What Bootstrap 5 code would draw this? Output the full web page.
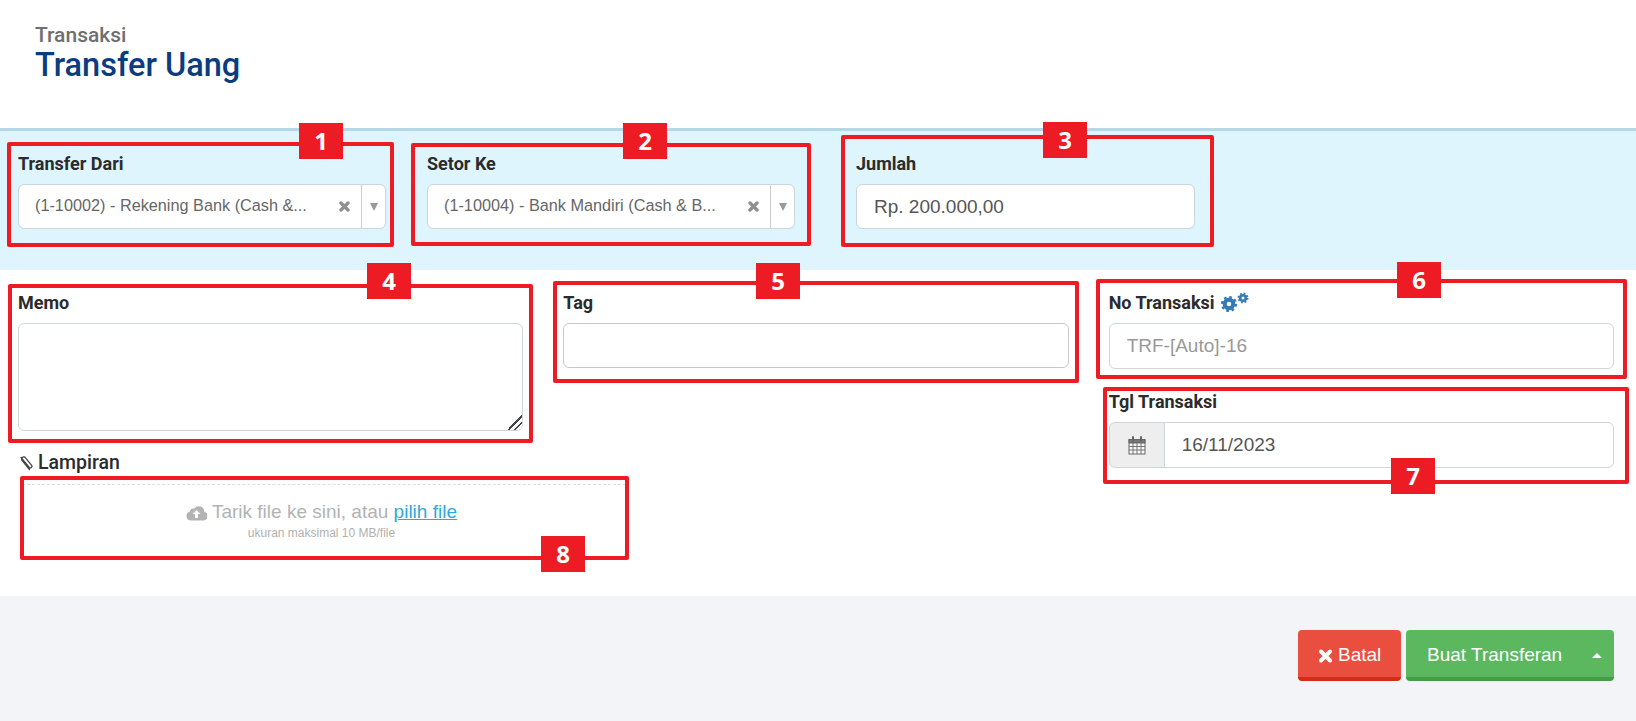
<!DOCTYPE html>
<html lang="id">
<head>
  <meta charset="UTF-8" />
  <meta name="viewport" content="width=device-width, initial-scale=1.0"/>
  <title>Transfer Uang</title>
  <link href="https://cdn.jsdelivr.net/npm/bootstrap@5.3.0/dist/css/bootstrap.min.css" rel="stylesheet" />
  <style>
    body {
      font-family: "Liberation Sans", Arial, sans-serif;
      background: #fff;
      color: #2b2b2b;
      margin: 0;
    }
    .page-wrap { position: relative; height: 721px; overflow: hidden; }
    .page-head { height: 128px; padding: 22px 0 0 35px; font-family: Roboto, sans-serif; font-weight: 500; }
    .head-sub { font-size: 21px; line-height: 26px; color: #6f6f6f; }
    .head-title { font-size: 32.5px; line-height: 34px; color: #0b3c7d; margin: 0; font-weight: 500; }

    .band { height: 142px; background: #def5fe; border-top: 3px solid #b5d7e6; padding-top: 22px; }
    .band-col { padding: 0 23px 0 18px; }
    .band-col-wide { padding: 0 32px 0 38px; }
    .form-col { padding: 0 22px 0 18px; }
    .fields { padding-top: 22px; height: 326px; }

    .field-label {
      font-family: Roboto, sans-serif;
      font-weight: 700;
      font-size: 18px;
      line-height: 22px;
      color: #2b2b2b;
      margin: 0 0 9px;
      display: block;
    }
    .field-box.form-control, .field-box .form-control {
      height: 45px;
      border-radius: 6px;
      border-color: #cdd7da;
      font-size: 19px;
      padding: 0 17px;
      color: #555;
      box-shadow: none;
    }
    .field-box .form-control::placeholder, .field-box.form-control::placeholder { color: #999; }
    .field-tall.form-control, .field-tall .form-control { height: 46px; }
    .memo-box.form-control { height: 108px; border-radius: 6px; border-color: #cdd7da; box-shadow: none; }
    .memo-box::-webkit-resizer {
      background: linear-gradient(135deg, transparent 50%, #444 50%, #444 57%, transparent 57%, transparent 72%, #444 72%, #444 79%, transparent 79%);
    }
    .tag-box.form-control { border-color: #c9c9c9; }
    .pick-box { padding: 0 !important; font-size: 16.25px !important; color: #666 !important; }
    .pick-text { flex: 1; min-width: 0; padding-left: 16px; padding-bottom: 3px; white-space: nowrap; }
    .pick-clear { width: 34px; display: flex; justify-content: center; }
    .pick-arrow { width: 24px; height: 100%; border-left: 1px solid #ccc; display: flex; align-items: center; justify-content: center; }
    .tri-down { width: 0; height: 0; border: 4.5px solid transparent; border-top: 8px solid #999; border-bottom: 0; }
    .cal-addon.input-group-text { width: 56px; justify-content: center; background: #eee; border-color: #cdd7da; border-radius: 6px 0 0 6px; padding: 0; }
    .date-row .form-control { border-radius: 0 6px 6px 0; }
    .date-group { margin-top: 22px; }
    .gear-label { display: flex; align-items: center; gap: 6px; }
    .gear-icon { margin-top: -2px; }

    .lamp-label { font-family: Roboto, sans-serif; font-weight: 500; font-size: 19.5px; line-height: 22px; margin: 0 0 10px; display: flex; align-items: center; gap: 5px; }
    .lamp-wrap { margin-top: 21px; }
    .drop-zone {
      width: 604px;
      height: 74px;
      margin-left: 4px;
      border: 1px dashed #ddd;
      text-align: center;
      padding: 16px 5px 0 0;
      color: #b3b3b3;
      font-size: 19px;
      line-height: 22px;
    }
    .drop-zone a { color: #2ea8e0; }
    .drop-hint { font-size: 12px; line-height: 14px; color: #b0b0b0; margin-top: 3px; }

    .foot-bar { height: 125px; background: #f2f4f8; padding: 34px 22px 0 0; gap: 5px; }
    .act-btn {
      height: 51px;
      border: 0;
      border-bottom: 4px solid;
      border-radius: 4px;
      color: #fff;
      font-size: 19px;
      padding: 4px 0 0;
    }
    .act-btn:hover, .act-btn:active { color: #fff !important; }
    .act-cancel { width: 103px; background: #e94e3e; border-color: #d22d18; }
    .act-cancel:hover, .act-cancel:active { background: #e94e3e !important; border-color: #d22d18 !important; }
    .act-save { width: 208px; background: #5cb85f; border-color: #469c49; display: flex; align-items: center; padding-left: 21px; justify-content: space-between; padding-right: 12px; }
    .act-save:hover, .act-save:active { background: #5cb85f !important; border-color: #469c49 !important; }
    .tri-up { width: 0; height: 0; border: 5px solid transparent; border-bottom: 5px solid #fff; border-top: 0; }

    /* annotation frames sit over the form */
    .note-frame { position: absolute; border: 4px solid #ed1c24; border-radius: 2px; }
    .note-num {
      position: absolute;
      width: 44px;
      height: 36px;
      background: #ed1c24;
      color: #fff;
      font-family: "Open Sans", sans-serif;
      font-weight: 700;
      font-size: 24px;
      line-height: 36px;
      text-align: center;
    }
    .nf-1 { left: 7px; top: 142px; width: 387px; height: 105px; }
    .nn-1 { left: 299px; top: 123px; }
    .nf-2 { left: 411px; top: 143px; width: 400px; height: 103px; }
    .nn-2 { left: 623px; top: 123px; }
    .nf-3 { left: 841px; top: 135px; width: 373px; height: 112px; }
    .nn-3 { left: 1043px; top: 122px; }
    .nf-4 { left: 8px; top: 284px; width: 525px; height: 159px; }
    .nn-4 { left: 367px; top: 263px; }
    .nf-5 { left: 553px; top: 281px; width: 526px; height: 102px; }
    .nn-5 { left: 756px; top: 263px; }
    .nf-6 { left: 1096px; top: 279px; width: 531px; height: 100px; }
    .nn-6 { left: 1397px; top: 262px; }
    .nf-7 { left: 1103px; top: 387px; width: 526px; height: 97px; }
    .nn-7 { left: 1391px; top: 458px; }
    .nf-8 { left: 20px; top: 476px; width: 609px; height: 84px; }
    .nn-8 { left: 541px; top: 536px; }
  </style>
</head>
<body>
  <div class="page-wrap">
    <div class="page-head">
      <div class="head-sub">Transaksi</div>
      <h1 class="head-title">Transfer Uang</h1>
    </div>

    <!-- Accounts and amount -->
    <div class="band">
      <div class="row g-0">
        <div class="col-3 band-col">
          <label class="field-label">Transfer Dari</label>
          <div class="field-box form-control pick-box d-flex align-items-center">
            <span class="pick-text">(1-10002) - Rekening Bank (Cash &amp;...</span>
            <span class="pick-clear"><svg width="11" height="11" viewBox="0 0 11 11"><path d="M2 2l7 7M9 2l-7 7" stroke="#909090" stroke-width="3.4" stroke-linecap="round"/></svg></span>
            <span class="pick-arrow"><span class="tri-down"></span></span>
          </div>
        </div>
        <div class="col-3 band-col">
          <label class="field-label">Setor Ke</label>
          <div class="field-box form-control pick-box d-flex align-items-center">
            <span class="pick-text">(1-10004) - Bank Mandiri (Cash &amp; B...</span>
            <span class="pick-clear"><svg width="11" height="11" viewBox="0 0 11 11"><path d="M2 2l7 7M9 2l-7 7" stroke="#909090" stroke-width="3.4" stroke-linecap="round"/></svg></span>
            <span class="pick-arrow"><span class="tri-down"></span></span>
          </div>
        </div>
        <div class="col-3 band-col-wide">
          <label class="field-label">Jumlah</label>
          <input class="field-box form-control" type="text" value="Rp. 200.000,00">
        </div>
      </div>
    </div>

    <!-- Memo, tag, number, date -->
    <div class="fields">
      <div class="row g-0">
        <div class="col-4 form-col">
          <label class="field-label">Memo</label>
          <textarea class="memo-box form-control"></textarea>
          <div class="lamp-wrap">
            <div class="lamp-label">
              <svg width="15" height="18" viewBox="0 0 15 18" fill="none" stroke="#444" stroke-width="1.3" stroke-linecap="round"><path d="M11.5 15.5L4.2 6.6c-.8-1-.8-2.4.2-3.2s2.300-.6 3.100.4l6 7.300c1.400 1.700-1 3.900-2.500 2.100L3 3.500"/></svg>
              Lampiran
            </div>
            <div class="drop-zone">
              <svg width="21" height="16" viewBox="0 0 21 16"><path d="M5 15.500a4.500 4.500 0 0 1-1.300-8.800 4 4 0 0 1 4.800-3.300A5.500 5.500 0 0 1 18.300 6.700 4.500 4.500 0 0 1 16.500 15.500z" fill="#b3b3b3"/><path d="M10.500 5l-4 4h2.500v4h3V9h2.500z" fill="#fff"/></svg>
              Tarik file ke sini, atau <a href="#">pilih file</a>
              <div class="drop-hint">ukuran maksimal 10 MB/file</div>
            </div>
          </div>
        </div>
        <div class="col-4 form-col">
          <label class="field-label">Tag</label>
          <input class="field-box tag-box form-control" type="text">
        </div>
        <div class="col-4 form-col">
          <label class="field-label gear-label">No Transaksi
            <svg class="gear-icon" width="29" height="20" viewBox="0 0 29 20" fill="none" stroke="#337ab7">
              <circle cx="8" cy="12" r="4.300" stroke-width="4"/>
              <circle cx="8" cy="12" r="7" stroke-width="2.200" stroke-dasharray="2.750 2.750"/>
              <circle cx="22" cy="6" r="2.800" stroke-width="2.600"/>
              <circle cx="22" cy="6" r="4.700" stroke-width="1.600" stroke-dasharray="1.850 1.850"/>
            </svg>
          </label>
          <input class="field-box field-tall form-control" type="text" placeholder="TRF-[Auto]-16">
          <div class="date-group">
            <label class="field-label">Tgl Transaksi</label>
            <div class="input-group field-box field-tall date-row">
              <span class="input-group-text cal-addon">
                <svg width="18" height="19" viewBox="0 0 18 19" fill="none" stroke="#666"><rect x="1" y="3.500" width="16" height="14.500" fill="#f7f7f7"/><path d="M1 3.500h16v3.500H1z" fill="#777"/><path d="M1 10.500h16M1 14h16M5 7V18M9 7V18M13 7V18" stroke-width=".9"/><path d="M5 1v4M13 1v4" stroke-width="2" stroke-linecap="round"/></svg>
              </span>
              <input class="form-control" type="text" value="16/11/2023">
            </div>
          </div>
        </div>
      </div>
    </div>

    <!-- Actions -->
    <div class="foot-bar d-flex justify-content-end align-items-start">
      <button class="btn act-btn act-cancel" type="button">
        <svg width="15" height="14" viewBox="0 0 15 14"><path d="M3 2.500l9 9M12 2.500l-9 9" stroke="#fff" stroke-width="4" stroke-linecap="round"/></svg>
        Batal
      </button>
      <button class="btn act-btn act-save" type="button">Buat Transferan <span class="tri-up"></span></button>
    </div>

    <!-- Numbered frames -->
    <div class="note-frame nf-1"></div><div class="note-num nn-1">1</div>
    <div class="note-frame nf-2"></div><div class="note-num nn-2">2</div>
    <div class="note-frame nf-3"></div><div class="note-num nn-3">3</div>
    <div class="note-frame nf-4"></div><div class="note-num nn-4">4</div>
    <div class="note-frame nf-5"></div><div class="note-num nn-5">5</div>
    <div class="note-frame nf-6"></div><div class="note-num nn-6">6</div>
    <div class="note-frame nf-7"></div><div class="note-num nn-7">7</div>
    <div class="note-frame nf-8"></div><div class="note-num nn-8">8</div>
  </div>
  <script src="https://cdn.jsdelivr.net/npm/bootstrap@5.3.0/dist/js/bootstrap.bundle.min.js"></script>
</body>
</html>
